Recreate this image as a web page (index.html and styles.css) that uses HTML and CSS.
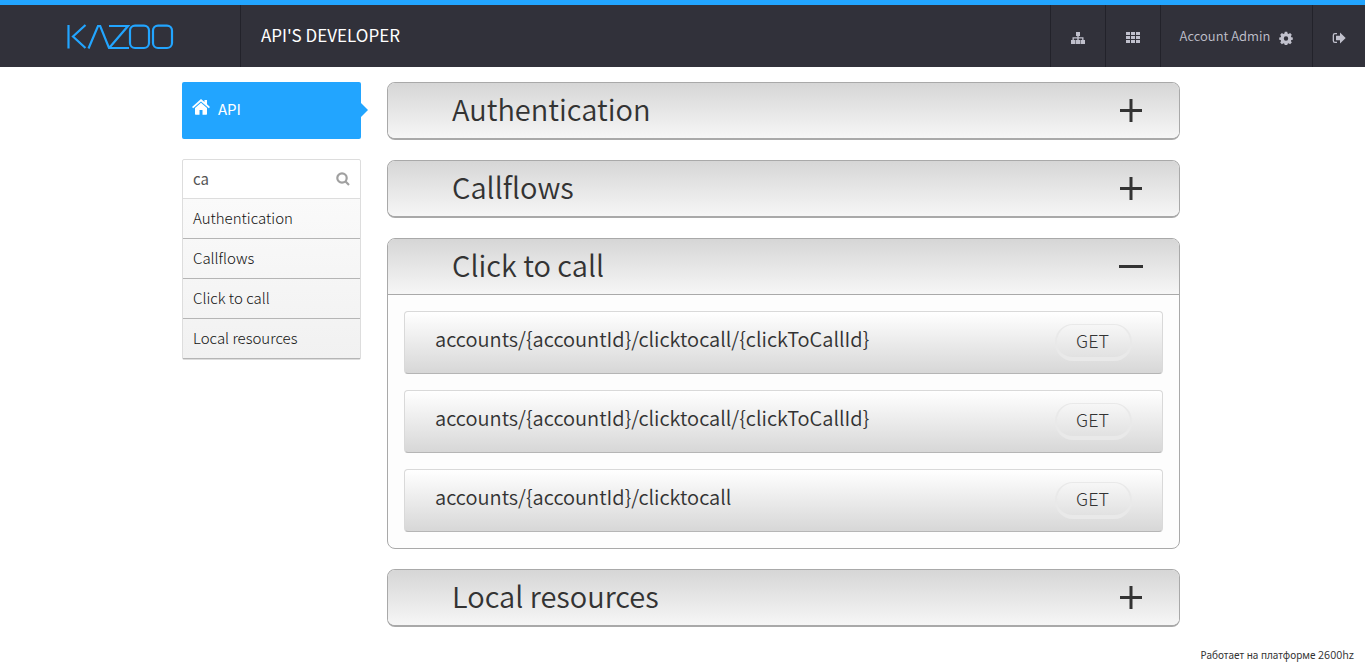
FILE: index.html
```html
<!DOCTYPE html>
<html lang="en">
<head>
<meta charset="utf-8">
<title>API's Developer</title>
<link rel="stylesheet" href="styles.css">
</head>
<body>
<header class="topbar">
  <a class="brand" href="#" aria-label="Kazoo">
    <svg class="logo" viewBox="0 0 107 26" fill="none" stroke="currentColor" stroke-width="2.200">
      <path d="M1.500 1v23.500M18.500 1L6 12.500L18.500 24M21.500 24.500L31 2h2.200L42 24h20M42 2h19L43 23"/>
      <rect x="63" y="1.600" width="19" height="22.400" rx="5"/>
      <rect x="86" y="1.600" width="19" height="22.400" rx="5"/>
    </svg>
  </a>
  <h1 class="app-title">API'S DEVELOPER</h1>
  <nav class="links">
    <a class="link" href="#" aria-label="Accounts">
      <svg class="icon" viewBox="0 0 14 14" fill="currentColor"><path d="M5 1h4v4H7.700v1.300H12.500V9H14v4H9.700V9h1.500V7.600H7.700V9H9.200v4H4.800V9h1.500V7.600H2.800V9h1.500v4H0V9h1.500V6.300h4.800V5H5z"/></svg>
    </a>
    <a class="link" href="#" aria-label="Apps">
      <svg class="icon wide" viewBox="0 0 15 12" fill="currentColor"><path d="M0 0h4v3H0zM5 0h4v3H5zM10 0h4v3h-4zM0 4h4v3H0zM5 4h4v3H5zM10 4h4v3h-4zM0 8h4v3H0zM5 8h4v3H5zM10 8h4v3h-4z"/></svg>
    </a>
    <a class="link account" href="#"><span>Account Admin</span>
      <svg class="icon" viewBox="0 0 14 14" fill="currentColor" fill-rule="evenodd"><path d="M5.800.8h2.400l.4 1.700 1 .4 1.500-.9 1.700 1.700-.9 1.500.4 1 1.500.3v2.200l-1.500.3-.4 1 .9 1.500-1.700 1.700-1.500-.9-1 .4-.4 1.700H5.800l-.4-1.700-1-.4-1.500.9-1.700-1.700.9-1.500-.4-1L.2 8.700V6.500l1.500-.3.4-1-.9-1.500L2.900 2l1.500.9 1-.4zM7 5.300a2.200 2.200 0 1 0 0 4.400 2.200 2.200 0 0 0 0-4.400z"/></svg>
    </a>
    <a class="link exit" href="#" aria-label="Log out">
      <svg class="icon" viewBox="0 0 14 14" fill="currentColor"><path d="M5 2v1.300H3Q2 3.300 2 4.300v5.400q0 1 1 1h2V12H3Q.7 12 .7 9.700V4.300Q.7 2 3 2zM8 1.500L13.700 7 8 12.500V9.200H4V4.800h4z"/></svg>
    </a>
  </nav>
</header>
<main class="page">
  <aside class="sidebar">
    <a class="api-tab" href="#">
      <svg class="home" viewBox="0 0 18 16" fill="currentColor"><path d="M9 0L0 8l1.200 1.300L9 2.400l7.800 6.900L18 8l-3-2.700V1h-2.500v2zM9 3.800L3 9v6q0 .7.7.7h3.800V11h3v4.700h3.800q.7 0 .7-.7V9z"/></svg>
      <span>API</span>
    </a>
    <div class="filter">
      <div class="search">
        <input class="search-input" type="text" value="ca" aria-label="Search">
        <svg class="lens" viewBox="0 0 14 14" fill="none" stroke="currentColor" stroke-width="2.200"><circle cx="6" cy="6" r="4.700"/><path d="M9.300 9.300L13 13"/></svg>
      </div>
      <ul class="results">
        <li><a href="#">Authentication</a></li>
        <li><a href="#">Callflows</a></li>
        <li><a href="#">Click to call</a></li>
        <li><a href="#">Local resources</a></li>
      </ul>
    </div>
  </aside>
  <div class="sections">
    <section class="section">
      <button class="section-head" type="button" aria-expanded="false"><span>Authentication</span><svg class="toggle" viewBox="0 0 24 24"><path d="M1 12.500h22M12 1v23"/></svg></button>
    </section>
    <section class="section">
      <button class="section-head" type="button" aria-expanded="false"><span>Callflows</span><svg class="toggle" viewBox="0 0 24 24"><path d="M1 12.500h22M12 1v23"/></svg></button>
    </section>
    <section class="section open">
      <button class="section-head" type="button" aria-expanded="true"><span>Click to call</span><svg class="toggle" viewBox="0 0 24 24"><path d="M0 12.500h24"/></svg></button>
      <div class="endpoints">
        <div class="endpoint"><span class="url">accounts/{accountId}/clicktocall/{clickToCallId}</span><button class="verb" type="button">GET</button></div>
        <div class="endpoint"><span class="url">accounts/{accountId}/clicktocall/{clickToCallId}</span><button class="verb" type="button">GET</button></div>
        <div class="endpoint"><span class="url">accounts/{accountId}/clicktocall</span><button class="verb" type="button">GET</button></div>
      </div>
    </section>
    <section class="section">
      <button class="section-head" type="button" aria-expanded="false"><span>Local resources</span><svg class="toggle" viewBox="0 0 24 24"><path d="M1 12.500h22M12 1v23"/></svg></button>
    </section>
  </div>
</main>
<footer class="powered">Работает на платформе <span class="vendor">2600hz</span></footer>
</body>
</html>
```
FILE: styles.css
```css
* { box-sizing: border-box; }
body {
  margin: 0;
  min-height: 100vh;
  display: flex;
  flex-direction: column;
  background: #fff;
  color: #333;
  font-family: "Noto Sans CJK SC", "Noto Sans", sans-serif;
  font-size: 15px;
  line-height: 20px;
}
a { color: inherit; text-decoration: none; }
button, input { font: inherit; color: inherit; }
svg { display: block; flex: none; }

.topbar {
  display: flex;
  height: 67px;
  border-top: 5px solid #22a5ff;
  background: #31313a;
  color: #c0c0cc;
}
.brand {
  width: 241px;
  padding: 19px 0 0 67px;
  border-right: 1px solid #22222a;
  color: #22a5ff;
}
.logo { width: 107px; height: 26px; }
.app-title {
  flex: 1;
  margin: 0;
  padding-left: 20px;
  color: #fff;
  font-size: 17px;
  font-weight: 400;
  line-height: 60px;
}
.links { display: flex; }
.link {
  display: flex;
  align-items: center;
  justify-content: center;
  width: 55px;
  border-left: 1px solid #22222a;
  font-size: 13px;
  font-weight: 350;
}
.account { width: 152px; gap: 9px; }
.exit { width: 53px; }
.icon { width: 14px; height: 14px; margin-top: 4px; }
.wide { width: 15px; height: 12px; }

.page {
  display: flex;
  gap: 26px;
  width: 100%;
  max-width: 1001px;
  margin: 0 auto;
  padding: 15px 3px 0 0;
}
.sidebar { flex: none; width: 179px; }
.api-tab {
  position: relative;
  display: flex;
  align-items: center;
  gap: 8px;
  height: 57px;
  padding: 0 10px 4px;
  border-radius: 2px;
  background: #22a5ff;
  color: #fff;
}
.api-tab::after {
  content: "";
  position: absolute;
  left: 100%;
  top: 21px;
  border: 7px solid transparent;
  border-right: 0;
  border-left-color: #22a5ff;
}
.home { width: 18px; height: 16px; margin-bottom: 4px; }
.filter {
  margin-top: 20px;
  border: 1px solid #ddd;
  border-radius: 2px;
}
.search {
  display: flex;
  align-items: center;
  height: 39px;
  padding: 0 10px;
  border-bottom: 1px solid #ddd;
}
.search-input {
  flex: 1;
  min-width: 0;
  padding: 0;
  border: 0;
  outline: 0;
  background: none;
  color: #555;
}
.lens { width: 14px; height: 14px; color: #a0a0a0; }
.results {
  margin: 0;
  padding: 0;
  list-style: none;
  background: linear-gradient(#fafafa, #f1f1f1);
  color: #111;
  font-weight: 300;
}
.results a {
  display: block;
  padding: 0 10px 2px;
  border-bottom: 1px solid #b5b5b5;
  line-height: 37px;
}

.sections {
  flex: 1;
  display: flex;
  flex-direction: column;
  gap: 20px;
}
.section {
  border: 1px solid #a9a9a9;
  border-bottom-width: 2px;
  border-radius: 8px;
  overflow: hidden;
}
.section.open { border-bottom-width: 1px; background: #fdfdfd; }
.section-head {
  display: flex;
  align-items: center;
  justify-content: space-between;
  width: 100%;
  height: 55px;
  padding: 0 36px 4px 64px;
  border: 0;
  background: linear-gradient(#d6d6d6, #f6f6f6);
  font-size: 29px;
  font-weight: 350;
  line-height: 51px;
}
.section.open .section-head { height: 56px; border-bottom: 1px solid #a9a9a9; }
.toggle { width: 24px; height: 24px; margin-top: 2px; stroke: #333; stroke-width: 3; }
.endpoints {
  display: flex;
  flex-direction: column;
  gap: 16px;
  padding: 16px;
}
.endpoint {
  display: flex;
  align-items: center;
  justify-content: space-between;
  padding: 12px 30px;
  border: 1px solid #d9d9d9;
  border-bottom-color: #b5b5b5;
  border-radius: 4px;
  background: linear-gradient(#fff, #d7d7d7);
}
.url { padding-bottom: 8px; font-size: 20px; font-weight: 350; line-height: 28px; }
.verb {
  width: 77px;
  height: 37px;
  padding: 0 2px 2px 0;
  border: solid #e9e9e9;
  border-width: 1px 2px 4px;
  border-radius: 18px;
  background: none;
  font-size: 18px;
  font-weight: 200;
  line-height: 30px;
}

.powered {
  margin-top: auto;
  padding: 0 11px 2px 0;
  font-family: "Noto Sans", sans-serif;
  font-size: 10px;
  text-align: right;
}
.vendor { font-family: "Noto Sans CJK SC", sans-serif; font-size: 11px; font-weight: 350; }
```
